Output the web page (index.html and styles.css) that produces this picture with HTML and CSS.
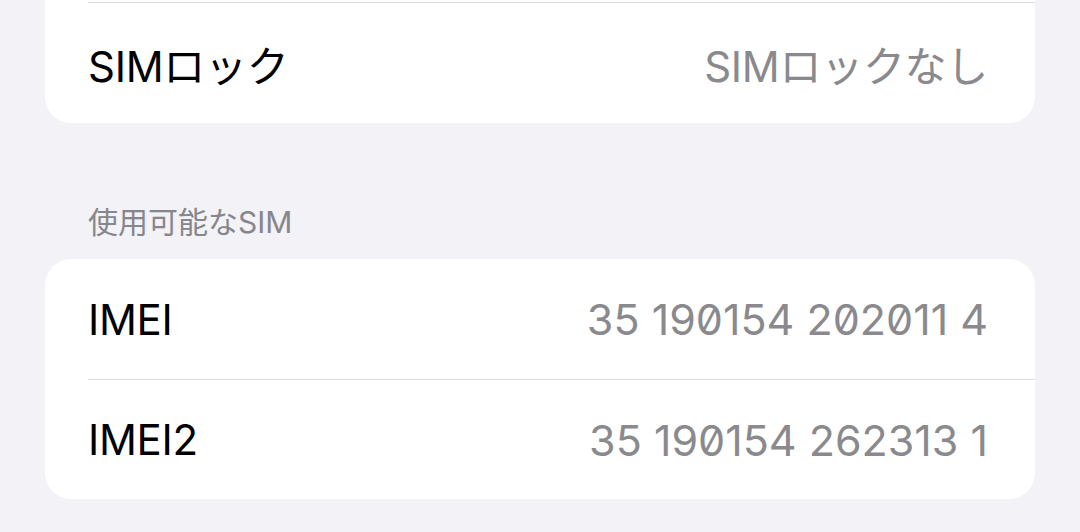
FILE: index.html
```html
<!DOCTYPE html>
<html lang="ja">
<head>
    <meta charset="UTF-8">
    <meta name="viewport" content="width=device-width, initial-scale=1.0">
    <title>情報</title>
    <link rel="stylesheet" href="styles.css">
</head>
<body>
    <div class="page">
        <!-- upper group, scrolled so only its last row shows -->
        <div class="group cut">
            <div class="row">
                <span class="label">SIMロック</span>
                <span class="value">SIMロックなし</span>
            </div>
        </div>

        <div class="section-title">使用可能なSIM</div>

        <div class="group">
            <div class="row">
                <span class="label">IMEI</span>
                <span class="value num">35 190154 202011 4</span>
            </div>
            <div class="row">
                <span class="label">IMEI2</span>
                <span class="value num">35 190154 262313 1</span>
            </div>
        </div>
    </div>
</body>
</html>
```

FILE: styles.css
```css
body {
    margin: 0;
    background-color: #f2f2f7;
    font-family: Inter, "Noto Sans CJK JP", sans-serif;
    color: #000;
}

.page {
    padding: 0 45px;
}

.group {
    background: #fff;
    border-radius: 26px;
    overflow: hidden;
}

.group.cut {
    border-radius: 0 0 26px 26px;
    padding-top: 2px;
}

.row {
    height: 120px;
    display: flex;
    align-items: center;
    justify-content: space-between;
    margin-left: 43px;
    padding-right: 47px;
    border-top: 1.5px solid #dcdce0;
    box-sizing: border-box;
}

.group:not(.cut) .row:first-child {
    border-top: none;
}

.group.cut .row {
    height: 121px;
}

.label {
    font-size: 42px;
    letter-spacing: -0.3px;
}

.value {
    font-size: 42px;
    color: #8a8a8e;
    letter-spacing: -0.3px;
}

.num {
    font-size: 43px;
    letter-spacing: 0;
    font-variant-numeric: slashed-zero;
    font-feature-settings: "zero" 1;
}

.section-title {
    height: 136px;
    padding: 84px 0 0 43px;
    font-size: 30px;
    color: #86868b;
    box-sizing: border-box;
    line-height: 1;
}
```
